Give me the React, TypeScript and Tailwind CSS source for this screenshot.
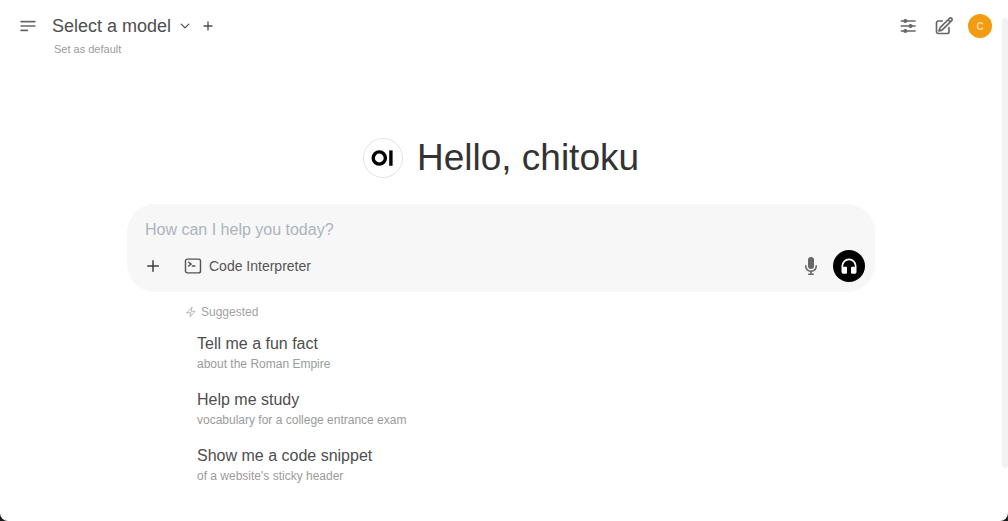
import React from "react";

type IconProps = { className?: string };

const stroke = {
  fill: "none",
  stroke: "currentColor",
  viewBox: "0 0 24 24",
  strokeLinecap: "round" as const,
  strokeLinejoin: "round" as const,
  "aria-hidden": true,
};

const MenuIcon = ({ className }: IconProps) => (
  <svg {...stroke} strokeWidth={2} className={className}>
    <path d="M3.75 6.75h16.5M3.75 12h16.5M3.75 17.25h7.5" />
  </svg>
);

const ChevronDown = ({ className }: IconProps) => (
  <svg {...stroke} strokeWidth={2.5} className={className}>
    <path d="m19.5 8.25-7.5 7.5-7.5-7.5" />
  </svg>
);

const PlusSmall = ({ className }: IconProps) => (
  <svg {...stroke} strokeWidth={2} className={className}>
    <path d="M12 6v12m6-6H6" />
  </svg>
);

const PlusIcon = ({ className }: IconProps) => (
  <svg viewBox="0 0 20 20" fill="currentColor" aria-hidden className={className}>
    <path d="M10.75 4.75a.75.75 0 0 0-1.5 0v4.5h-4.5a.75.75 0 0 0 0 1.5h4.5v4.5a.75.75 0 0 0 1.5 0v-4.5h4.5a.75.75 0 0 0 0-1.5h-4.5v-4.5Z" />
  </svg>
);

const SlidersIcon = ({ className }: IconProps) => (
  <svg {...stroke} strokeWidth={2} className={className}>
    <path d="M4 6h16.5M4 12h16.5M4 18h16.5" />
    <g fill="currentColor" stroke="none">
      <circle cx="8.8" cy="6" r="2.5" />
      <circle cx="15" cy="12" r="2.5" />
      <circle cx="8.8" cy="18" r="2.5" />
    </g>
  </svg>
);

const PencilSquare = ({ className }: IconProps) => (
  <svg {...stroke} strokeWidth={2} className={className}>
    <path d="m16.862 4.487 1.687-1.688a1.875 1.875 0 1 1 2.652 2.652L10.582 16.07a4.5 4.5 0 0 1-1.897 1.13L6 18l.8-2.685a4.5 4.5 0 0 1 1.13-1.897l8.932-8.931Zm0 0L19.5 7.125M18 14v4.75A2.25 2.25 0 0 1 15.75 21H5.25A2.25 2.25 0 0 1 3 18.75V8.25A2.25 2.25 0 0 1 5.25 6H10" />
  </svg>
);

const TerminalIcon = ({ className }: IconProps) => (
  <svg {...stroke} strokeWidth={1.75} className={className}>
    <path d="m6.75 7.5 3 2.25-3 2.25m4.5 0h3m-9 8.25h13.5A2.25 2.25 0 0 0 21 18V6a2.25 2.25 0 0 0-2.25-2.25H5.25A2.25 2.25 0 0 0 3 6v12a2.25 2.25 0 0 0 2.25 2.25Z" />
  </svg>
);

const BoltIcon = ({ className }: IconProps) => (
  <svg {...stroke} strokeWidth={1.5} className={className}>
    <path d="m3.75 13.5 10.5-11.25L12 10.5h8.25L9.75 21.75 12 13.5H3.75Z" />
  </svg>
);

const MicIcon = ({ className }: IconProps) => (
  <svg viewBox="0 0 20 20" fill="currentColor" aria-hidden className={className}>
    <path d="M7 4a3 3 0 0 1 6 0v6a3 3 0 1 1-6 0V4Z" />
    <path d="M5.5 9.643a.75.75 0 0 0-1.5 0V10c0 3.06 2.29 5.585 5.25 5.954V17.5h-1.5a.75.75 0 0 0 0 1.5h4.5a.75.75 0 0 0 0-1.5h-1.5v-1.546A6.001 6.001 0 0 0 16 10v-.357a.75.75 0 0 0-1.5 0V10a4.5 4.5 0 0 1-9 0v-.357Z" />
  </svg>
);

const HeadphoneIcon = ({ className }: IconProps) => (
  <svg viewBox="0 0 24 24" fill="currentColor" aria-hidden className={className}>
    <path
      fillRule="evenodd"
      clipRule="evenodd"
      d="M12 5a7 7 0 0 0-7 7v1.17c.313-.11.65-.17 1-.17h2.6a1 1 0 0 1 1 1v6.2a1 1 0 0 1-1 1H5a2 2 0 0 1-2-2V12a9 9 0 0 1 18 0v7.2a2 2 0 0 1-2 2h-3.6a1 1 0 0 1-1-1V14a1 1 0 0 1 1-1H18c.35 0 .687.06 1 .17V12a7 7 0 0 0-7-7Z"
    />
  </svg>
);

const Logo = ({ className }: IconProps) => (
  <svg viewBox="0 0 40 40" role="img" aria-label="Open WebUI" className={className}>
    <circle cx="20" cy="20" r="19.5" fill="#fff" stroke="#e3e3e3" />
    <circle cx="16.3" cy="20" r="6.1" fill="none" stroke="#000" strokeWidth="3.4" />
    <path fill="#000" d="M26.2 12.4h3.4v15.4h-3.4z" />
  </svg>
);

const suggestions = [
  { title: "Tell me a fun fact", detail: "about the Roman Empire" },
  { title: "Help me study", detail: "vocabulary for a college entrance exam" },
  { title: "Show me a code snippet", detail: "of a website's sticky header" },
];

function Header() {
  return (
    <header className="flex items-start justify-between pt-3 pr-[10px] pl-[18px]">
      <div className="flex items-start">
        <button type="button" aria-label="Toggle sidebar" className="flex h-7 items-center text-[#676767]">
          <MenuIcon className="size-5" />
        </button>
        <div className="ml-[14px]">
          <div className="flex h-7 items-center">
            <button type="button" className="flex items-center text-lg text-[#4e4e4e]">
              Select a model
              <ChevronDown className="ml-2 size-3" />
            </button>
            <button type="button" aria-label="Add model" className="ml-[9px] text-[#4e4e4e]">
              <PlusSmall className="size-4" />
            </button>
          </div>
          <button type="button" className="ml-[2px] block text-[11px] leading-[18px] text-[#9b9b9b]">
            Set as default
          </button>
        </div>
      </div>
      <div className="flex h-7 items-center text-[#676767]">
        <button type="button" aria-label="Controls">
          <SlidersIcon className="size-5" />
        </button>
        <button type="button" aria-label="New chat" className="ml-4">
          <PencilSquare className="size-5" />
        </button>
        <button
          type="button"
          aria-label="User menu"
          className="ml-[14px] flex size-6 items-center justify-center rounded-full bg-[#f39c12] text-[10px] font-bold text-[#fbdba6]"
        >
          C
        </button>
      </div>
    </header>
  );
}

function Composer() {
  return (
    <form
      onSubmit={(e) => e.preventDefault()}
      className="mt-[26px] w-full rounded-[28px] bg-[#f7f7f7] px-[10px] pt-3 pb-[10px]"
    >
      <input
        type="text"
        aria-label="Message"
        placeholder="How can I help you today?"
        className="block h-7 w-full bg-transparent px-2 text-base text-[#333] outline-none placeholder:text-[#acb4bd]"
      />
      <div className="mt-[6px] flex h-8 items-center">
        <button type="button" aria-label="More" className="ml-[6px] text-[#3f3f3f]">
          <PlusIcon className="size-5" />
        </button>
        <button type="button" className="ml-5 flex items-center gap-[6px] text-sm text-[#545454]">
          <TerminalIcon className="size-5" />
          Code Interpreter
        </button>
        <button type="button" aria-label="Dictate" className="ml-auto text-[#676767]">
          <MicIcon className="size-5" />
        </button>
        <button
          type="button"
          aria-label="Voice mode"
          className="ml-3 flex size-8 items-center justify-center rounded-full bg-black text-white"
        >
          <HeadphoneIcon className="size-5" />
        </button>
      </div>
    </form>
  );
}

export default function App() {
  return (
    <div className="min-h-screen bg-[#1b1b1b] font-['Liberation_Sans',Arial,sans-serif]">
      <div className="flex min-h-screen overflow-hidden rounded-b-lg bg-white">
        <div className="min-w-0 flex-1">
          <Header />
          <main className="mx-auto max-w-3xl px-[10px] pt-20">
            <div className="flex items-center justify-center gap-[14px]">
              <Logo className="size-10" />
              <h1 className="text-[37px] leading-10 text-[#333]">Hello, chitoku</h1>
            </div>
            <Composer />
            <section className="mt-3 px-[58px]">
              <h2 className="flex items-center gap-1 text-xs text-[#a3a3a3]">
                <BoltIcon className="size-3" />
                Suggested
              </h2>
              <ul className="mt-1 px-3">
                {suggestions.map(({ title, detail }) => (
                  <li key={title}>
                    <button type="button" className="block h-14 w-full text-left">
                      <span className="block text-base leading-6 text-[#4e4e4e]">{title}</span>
                      <span className="block text-xs text-[#9b9b9b]">{detail}</span>
                    </button>
                  </li>
                ))}
              </ul>
            </section>
          </main>
        </div>
        <div aria-hidden className="flex w-[6px] flex-col pt-[18px] pb-[53px]">
          <div className="flex-1 rounded-full bg-[#f1f1f1]" />
        </div>
      </div>
    </div>
  );
}
